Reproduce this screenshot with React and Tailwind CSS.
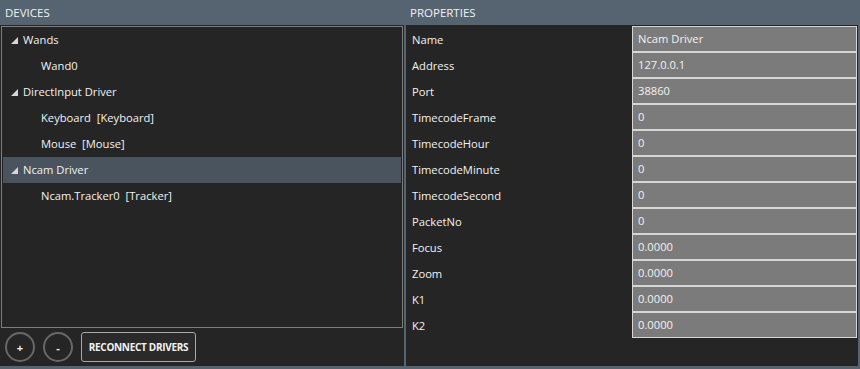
import React from 'react';

const tree = [
  { label: 'Wands', parent: true },
  { label: 'Wand0' },
  { label: 'DirectInput Driver', parent: true },
  { label: 'Keyboard  [Keyboard]' },
  { label: 'Mouse  [Mouse]' },
  { label: 'Ncam Driver', parent: true, selected: true },
  { label: 'Ncam.Tracker0  [Tracker]' },
];

const props = [
  ['Name', 'Ncam Driver'],
  ['Address', '127.0.0.1'],
  ['Port', '38860'],
  ['TimecodeFrame', '0'],
  ['TimecodeHour', '0'],
  ['TimecodeMinute', '0'],
  ['TimecodeSecond', '0'],
  ['PacketNo', '0'],
  ['Focus', '0.0000'],
  ['Zoom', '0.0000'],
  ['K1', '0.0000'],
  ['K2', '0.0000'],
];

const Triangle = () => (
  <svg width="7" height="7" viewBox="0 0 7 7" className="shrink-0">
    <polygon points="7,0 7,7 0,7" fill="#d6d6d6" />
  </svg>
);

export default function App() {
  return (
    <div
      className="w-[860px] h-[369px] bg-[#566371] flex flex-col text-[11.2px] text-[#f2f2f2] overflow-hidden"
      style={{ fontFamily: '"Open Sans", "Noto Sans", sans-serif' }}
    >
      {/* header */}
      <div className="h-[25px] flex items-center shrink-0 text-[11.5px] pt-[1px]">
        <div className="w-[406px] pl-[5px]">DEVICES</div>
        <div className="pl-[4px]">PROPERTIES</div>
      </div>

      <div className="flex flex-1 gap-[2px] pr-[2px] pb-[3px] min-h-0">
        {/* devices */}
        <div className="w-[404px] bg-[#252525] flex flex-col pt-[1px]">
          <div className="ml-[1px] w-[402px] h-[302px] border border-[#7d7d7d] px-[1px]">
            {tree.map((row, i) => (
              <div
                key={i}
                className={`h-[26px] flex items-center whitespace-pre pt-[1px] ${
                  row.selected ? 'bg-[#4a545e]' : ''
                } ${row.parent ? 'pl-[8px] gap-[5px]' : 'pl-[38px]'}`}
              >
                {row.parent && (
                  <span className="-mt-[1px]">
                    <Triangle />
                  </span>
                )}
                <span>{row.label}</span>
              </div>
            ))}
          </div>
          <div className="flex items-center gap-[8px] pl-[5px] pt-[4px]">
            <button className="w-[30px] h-[30px] rounded-full border-2 border-[#686868] flex items-center justify-center text-[11px] font-bold leading-none">
              +
            </button>
            <button className="w-[30px] h-[30px] rounded-full border-2 border-[#686868] flex items-center justify-center text-[11px] font-bold leading-none">
              -
            </button>
            <button className="h-[30px] w-[115px] rounded-[3px] border border-[#a8a8a8] bg-[#2a2a2a] text-[10px] font-bold tracking-[-0.3px] pt-[1px]">
              RECONNECT DRIVERS
            </button>
          </div>
        </div>

        {/* properties */}
        <div className="flex-1 bg-[#252525] pt-[1px] pr-[1px]">
          {props.map(([k, v]) => (
            <div key={k} className="h-[26px] flex">
              <div className="w-[226px] pl-[6px] flex items-center pt-[2px]">{k}</div>
              <div className="flex-1 bg-[#7b7b7b] border border-[#d6d6d6] flex items-center pl-[5px] pt-[1px]">{v}</div>
            </div>
          ))}
        </div>
      </div>
    </div>
  );
}
